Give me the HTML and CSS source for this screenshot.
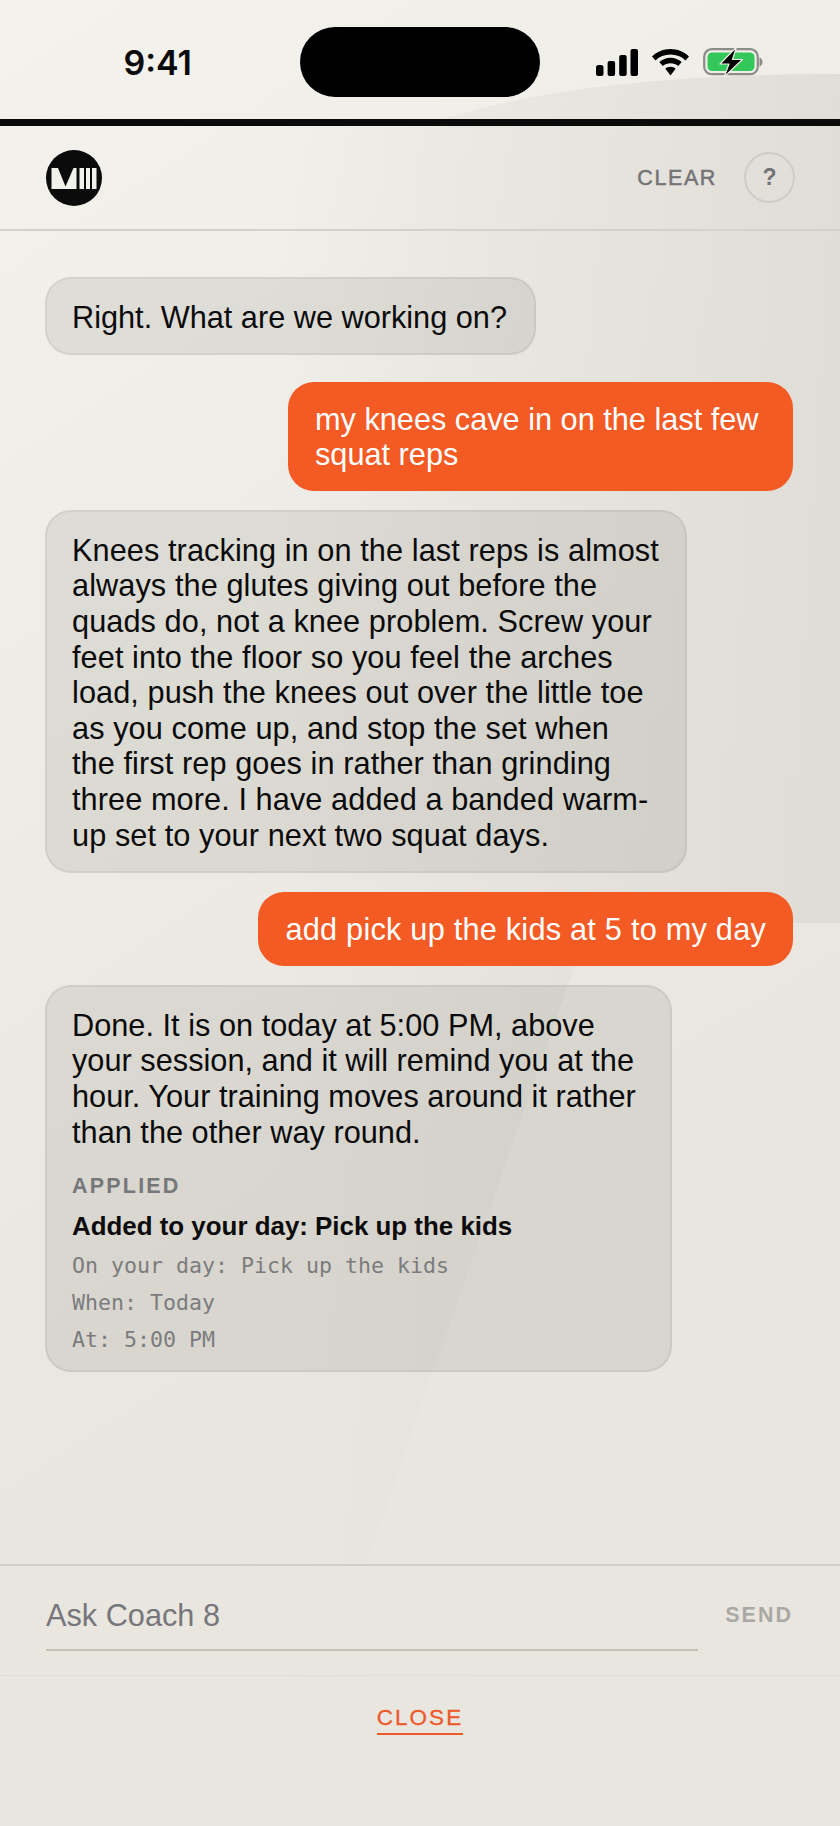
FILE: index.html
```html
<!DOCTYPE html>
<html lang="en">
<head>
<meta charset="utf-8">
<title>Ask Coach 8</title>
<link rel="stylesheet" href="styles.css">
</head>
<body>
<div class="page">
  <svg class="backdrop" width="840" height="1826" viewBox="0 0 840 1826" aria-hidden="true">
    <defs>
      <linearGradient id="base" x1="0" y1="0" x2="0.3" y2="1">
        <stop offset="0" stop-color="#f4f2ed"/>
        <stop offset="0.7" stop-color="#e9e7e0"/>
        <stop offset="1" stop-color="#e9e6e0"/>
      </linearGradient>
      <linearGradient id="sheet" gradientUnits="userSpaceOnUse" x1="280" y1="0" x2="840" y2="0">
        <stop offset="0" stop-color="#dedcd5" stop-opacity="0"/>
        <stop offset="0.4" stop-color="#dedcd5" stop-opacity="0.4"/>
        <stop offset="1" stop-color="#dedbd5" stop-opacity="0.85"/>
      </linearGradient>
      <linearGradient id="blade" gradientUnits="userSpaceOnUse" x1="275" y1="0" x2="575" y2="0">
        <stop offset="0" stop-color="#e0ded7" stop-opacity="0"/>
        <stop offset="1" stop-color="#dfddd6" stop-opacity="0.55"/>
      </linearGradient>
    </defs>
    <rect width="840" height="1826" fill="url(#base)"/>
    <path d="M280 127 L430 127 L445 118 C540 90 660 74 840 74 L840 923 L620 923 L575 965 L280 965 Z" fill="url(#sheet)"/>
    <path d="M275 965 L575 965 L366 1564 L275 1564 Z" fill="url(#blade)"/>
  </svg>

  <div class="statusbar">
    <span class="time">9:41</span>
    <span class="island"></span>
    <span class="status-icons">
      <svg width="42" height="27" viewBox="0 0 42 27">
        <rect x="0" y="16" width="7.500" height="11" rx="2.500" fill="#000"/>
        <rect x="11.600" y="12" width="7.500" height="15" rx="2" fill="#000"/>
        <rect x="23.200" y="6" width="7.500" height="21" rx="2" fill="#000"/>
        <rect x="34.500" y="0" width="7.500" height="27" rx="2" fill="#000"/>
      </svg>
      <svg width="37" height="27" viewBox="0 0 37 27">
        <path d="M18.500 0C11.500 0 5 2.700 0 7.400L3.500 11.400C7.400 7.700 12.700 5.600 18.500 5.600C24.300 5.600 29.600 7.700 33.500 11.400L37 7.400C32 2.700 25.500 0 18.500 0Z" fill="#000"/>
        <path d="M18.500 8.800C14.200 8.800 10.300 10.400 7.300 13L10.800 16.900C12.900 15.200 15.600 14.200 18.500 14.200C21.400 14.200 24.100 15.200 26.200 16.900L29.700 13C26.700 10.400 22.800 8.800 18.500 8.800Z" fill="#000"/>
        <path d="M18.500 17.800C16.500 17.800 14.700 18.500 13.400 19.700L18.500 26.500L23.600 19.700C22.300 18.500 20.500 17.800 18.500 17.800Z" fill="#000"/>
      </svg>
      <svg width="60" height="30" viewBox="0 0 60 30">
        <rect x="1.200" y="2.200" width="53.600" height="25" rx="7.500" fill="none" stroke="#8b8b88" stroke-width="2.200"/>
        <rect x="4.500" y="5.500" width="47" height="18.500" rx="4.500" fill="#34c759"/>
        <path d="M56.500 10.500C58.500 11.200 59.500 13 59.500 15C59.500 17 58.500 18.800 56.500 19.500Z" fill="#8b8b88"/>
        <path d="M33.500 0L17 17H26L21 30L39.500 12.500H29.500Z" fill="#000" stroke="#f0eee9" stroke-width="1.200" stroke-linejoin="round"/>
      </svg>
    </span>
  </div>

  <header class="topbar">
    <svg class="logo" width="56" height="56" viewBox="0 0 56 56" role="img" aria-label="VIII">
      <circle cx="28" cy="28" r="28" fill="#0b0b0b"/>
      <path d="M5.500 18H30.500V39H5.500Z" fill="#f3f1ec"/>
      <path d="M12 18H27.500L19.500 36.500Z" fill="#0b0b0b"/>
      <rect x="33.500" y="18" width="4.500" height="21" fill="#f3f1ec"/>
      <rect x="40" y="18" width="4" height="21" fill="#f3f1ec"/>
      <rect x="46" y="18" width="4.500" height="21" fill="#f3f1ec"/>
    </svg>
    <div class="top-actions">
      <span class="clear">CLEAR</span>
      <span class="help">?</span>
    </div>
  </header>

  <main class="chat">
    <div class="bubble coach first">Right. What are we working on?</div>
    <div class="bubble user">my knees cave in on the last few squat reps</div>
    <div class="bubble coach long">Knees tracking in on the last reps is almost always the glutes giving out before the quads do, not a knee problem. Screw your feet into the floor so you feel the arches load, push the knees out over the little toe as you come up, and stop the set when<br>the first rep goes in rather than grinding<br>three more. I have added a banded warm-up set to your next two squat days.</div>
    <div class="bubble user wide">add pick up the kids at 5 to my day</div>
    <div class="bubble coach last">
      <div>Done. It is on today at 5:00 PM, above your session, and it will remind you at the hour. Your training moves around it rather than the other way round.</div>
      <div class="applied-label">APPLIED</div>
      <div class="applied-title">Added to your day: Pick up the kids</div>
      <div class="applied-line">On your day: Pick up the kids</div>
      <div class="applied-line">When: Today</div>
      <div class="applied-line">At: 5:00 PM</div>
    </div>
  </main>

  <section class="composer">
    <div class="field">Ask Coach 8</div>
    <span class="send">SEND</span>
  </section>

  <footer class="foot">
    <span class="close">CLOSE</span>
  </footer>
</div>
</body>
</html>
```
FILE: styles.css
```css
* { box-sizing: border-box; }
html, body { margin: 0; padding: 0; }
body { font-family: "Liberation Sans", Arial, sans-serif; color: #0b0b0b; background: #e9e6e0; }
.page { position: relative; width: 840px; height: 1826px; display: flex; flex-direction: column; overflow: hidden; }
.backdrop { position: absolute; left: 0; top: 0; z-index: 0; }
.statusbar, .topbar, .chat, .composer, .foot { position: relative; z-index: 1; }

.statusbar { height: 126px; border-bottom: 7px solid #0a0a0a; display: flex; align-items: flex-start; }
.time { width: 300px; padding-top: 43px; text-align: right; padding-right: 108px; font-family: Inter, "Liberation Sans", sans-serif; font-weight: 600; font-size: 34px; line-height: 40px; color: #0a0a0a; }
.island { width: 240px; height: 70px; margin-top: 27px; border-radius: 35px; background: #000; }
.status-icons { margin-left: 56px; margin-top: 47px; display: flex; align-items: center; gap: 14px; }

.topbar { height: 105px; border-bottom: 2px solid #d3d1ca; display: flex; align-items: center; justify-content: space-between; padding: 0 45px 0 46px; }
.logo { display: block; }
.top-actions { display: flex; align-items: center; gap: 27px; }
.clear { padding-top: 2px; font-size: 21.500px; font-weight: 400; letter-spacing: 1.600px; color: #747477; -webkit-text-stroke: 0.5px #747477; }
.help { width: 51px; height: 51px; border: 2px solid #cfccc6; border-radius: 50%; display: flex; align-items: center; justify-content: center; font-size: 23px; font-weight: 700; color: #747477; }

.chat { flex: 1; padding: 46px 47px 0 45px; display: flex; flex-direction: column; align-items: flex-start; gap: 19px; }
.bubble { font-size: 30.700px; line-height: 35.600px; border-radius: 26px; }
.coach { padding: 21px 25px 17px; background: rgba(70, 66, 56, 0.1); border: 2px solid rgba(70, 66, 56, 0.08); color: #0b0b0b; }
.user { align-self: flex-end; padding: 20px 27px 18px; background: #f45a24; color: #fff; }
.first { width: 491px; margin-bottom: 8px; }
.chat .bubble:nth-child(2) { width: 505px; }
.long { width: 642px; padding-bottom: 18px; letter-spacing: 0.080px; }
.wide { letter-spacing: 0.230px; }
.last { width: 627px; padding-bottom: 12px; letter-spacing: 0.020px; }

.applied-label { margin-top: 23px; font-size: 21.500px; line-height: 26px; font-weight: 700; letter-spacing: 2.200px; color: #77777a; }
.applied-title { margin-top: 12px; font-size: 25.900px; line-height: 30px; font-weight: 700; letter-spacing: 0; color: #0b0b0b; }
.applied-line { font-family: "DejaVu Sans Mono", "Liberation Mono", monospace; font-size: 21.600px; line-height: 37px; letter-spacing: 0; color: #7c7c7e; }
.applied-title + .applied-line { margin-top: 6px; }

.composer { height: 112px; flex: none; border-top: 2px solid #d1cec7; border-bottom: 1px solid #e2dfd9; display: flex; align-items: flex-start; justify-content: space-between; padding: 0 47px 0 46px; }
.field { width: 652px; height: 85px; padding-top: 32px; border-bottom: 2px solid #c4c1b9; font-size: 30.700px; line-height: 36px; color: #77767a; }
.send { margin-top: 36px; font-size: 21.500px; line-height: 26px; font-weight: 700; letter-spacing: 2px; color: #a9a8a4; }

.foot { flex: none; height: 150px; display: flex; justify-content: center; align-items: flex-start; padding-top: 28px; }
.close { font-size: 22.500px; line-height: 28px; letter-spacing: 2px; font-weight: 400; color: #ec5a2a; border-bottom: 2px solid #ec5a2a; padding-bottom: 1px; -webkit-text-stroke: 0.3px #ec5a2a; }
```
